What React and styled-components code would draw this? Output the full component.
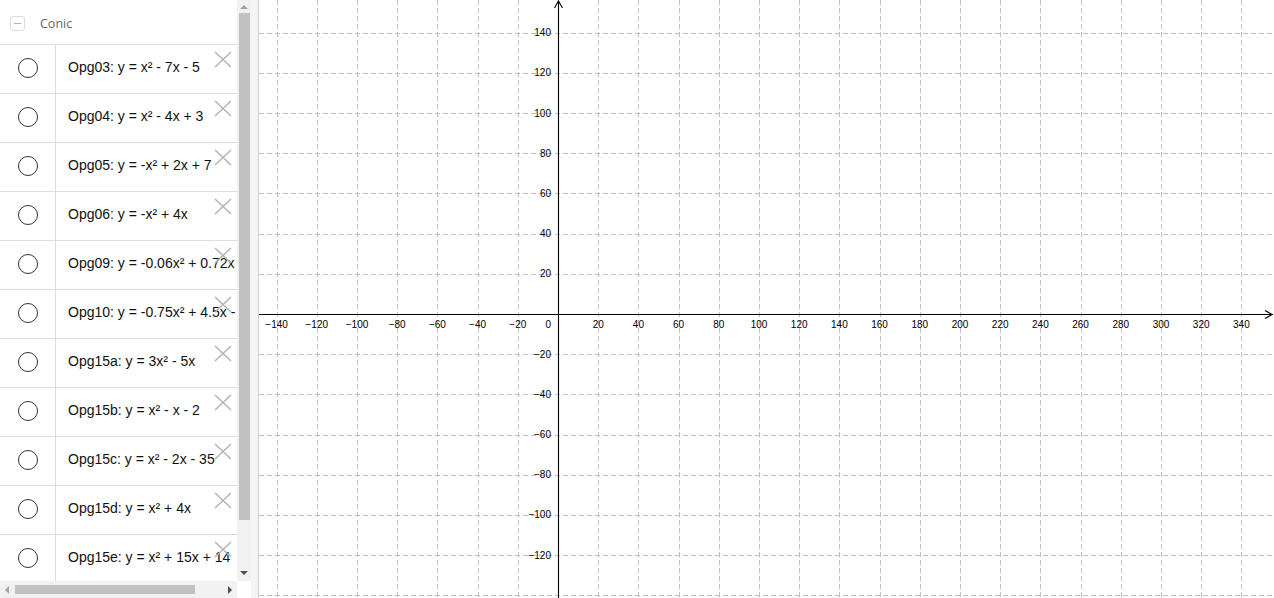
import React from "react";
import styled, { createGlobalStyle } from "styled-components";

const GlobalStyle = createGlobalStyle`
  html, body { margin: 0; padding: 0; background: #fff; }
  body { font-family: "Liberation Sans", Arial, sans-serif; }
`;

const Layout = styled.div`
  display: flex;
  width: 1274px;
  height: 598px;
  overflow: hidden;
  background: #fff;
`;

const AlgebraView = styled.div`
  width: 251px;
  flex: none;
  display: grid;
  grid-template-columns: 237px 14px;
  grid-template-rows: 581px 17px;
`;

const List = styled.div`
  overflow: hidden;
  display: flex;
  flex-direction: column;
`;

const Header = styled.div`
  height: 42px;
  flex: none;
  display: flex;
  align-items: center;
  border-bottom: 1px solid #dddddd;
  padding-left: 10px;
  padding-top: 2px;
  gap: 15px;
`;

const Collapse = styled.div`
  width: 13px;
  height: 13px;
  border: 1px solid #dcdcdc;
  border-radius: 3px;
  display: flex;
  align-items: center;
  justify-content: center;
  margin-top: 1px;
  &::after {
    content: "";
    width: 7px;
    height: 1px;
    background: #b0b0b0;
  }
`;

const GroupTitle = styled.span`
  font-family: "Open Sans", "Liberation Sans", sans-serif;
  font-size: 12.5px;
  color: #666;
`;

const Row = styled.div`
  position: relative;
  height: 48px;
  flex: none;
  display: grid;
  grid-template-columns: 56px 1fr;
  border-bottom: 1px solid #dddddd;
`;

const Marble = styled.div`
  border-right: 1px solid #dddddd;
  display: flex;
  align-items: center;
  justify-content: center;
  padding-bottom: 2px;
  &::before {
    content: "";
    width: 18px;
    height: 18px;
    border: 1.3px solid #333;
    border-radius: 50%;
    margin-left: 1px;
  }
`;

const Formula = styled.div`
  display: flex;
  align-items: center;
  padding-left: 12px;
  padding-bottom: 4px;
  white-space: nowrap;
  font-family: "Liberation Sans", Arial, sans-serif;
  font-size: 14px;
  color: #111;
  overflow: hidden;
`;

const Delete = styled.svg`
  position: absolute;
  left: 214px;
  top: 6px;
  width: 18px;
  height: 17px;
`;

const VScroll = styled.div`
  background: #f1f1f1;
  display: flex;
  flex-direction: column;
  align-items: center;
  padding: 5px 0 6px;
  gap: 4px;
`;

const HScroll = styled.div`
  background: #f1f1f1;
  display: flex;
  align-items: center;
  padding: 0 5px 0 5px;
  gap: 6px;
`;

const Corner = styled.div`
  background: #fff;
`;

const Arrow = styled.div`
  width: 0;
  height: 0;
  flex: none;
  border: 4px solid transparent;
  ${(p) => p.dir === "up" && "border-bottom-color: #a3a3a3; border-top-width: 0;"}
  ${(p) => p.dir === "down" && "border-top-color: #505050; border-bottom-width: 0;"}
  ${(p) => p.dir === "left" && "border-right-color: #a3a3a3; border-left-width: 0;"}
  ${(p) => p.dir === "right" && "border-left-color: #505050; border-right-width: 0;"}
`;

const VThumb = styled.div`
  width: 11px;
  height: 507px;
  background: #c1c1c1;
  margin-left: 1px;
`;

const VTrack = styled.div`
  flex: 1;
`;

const HThumb = styled.div`
  width: 180px;
  height: 9px;
  background: #c1c1c1;
`;

const HTrack = styled.div`
  flex: 1;
`;

const Splitter = styled.div`
  width: 7px;
  flex: none;
  background: #f5f5f5;
  border-right: 1px solid #cfcfcf;
`;

const Graphics = styled.div`
  flex: 1;
  position: relative;
  overflow: hidden;
`;

const rows = [
  "Opg03: y = x² - 7x - 5",
  "Opg04: y = x² - 4x + 3",
  "Opg05: y = -x² + 2x + 7",
  "Opg06: y = -x² + 4x",
  "Opg09: y = -0.06x² + 0.72x",
  "Opg10: y = -0.75x² + 4.5x - 6",
  "Opg15a: y = 3x² - 5x",
  "Opg15b: y = x² - x - 2",
  "Opg15c: y = x² - 2x - 35",
  "Opg15d: y = x² + 4x",
  "Opg15e: y = x² + 15x + 14",
];

const W = 1015;
const H = 598;
const OX = 299;
const OY = 314;
const SX = 40.2;
const SY = 40.17;

const label = (v) => (v < 0 ? "\u2212" + Math.abs(v) : String(v));

const Plane = () => {
  const xs = [];
  for (let k = -7; k <= 17; k++) xs.push(k);
  const ys = [];
  for (let k = -7; k <= 7; k++) ys.push(k);
  return (
    <svg width={W} height={H} style={{ display: "block" }}>
      <g stroke="#c0c0c0" strokeWidth="1" strokeDasharray="5 3">
        {xs.map((k) => {
          const x = Math.round(OX + k * SX) + 0.5;
          return <line key={"v" + k} x1={x} y1={0} x2={x} y2={H} />;
        })}
        {ys.map((k) => {
          const y = Math.round(OY - k * SY) + 0.5;
          return <line key={"h" + k} x1={0} y1={y} x2={W} y2={y} />;
        })}
      </g>
      <g stroke="#000" strokeWidth="1.1" fill="none">
        <line x1={0} y1={OY + 0.5} x2={W - 1} y2={OY + 0.5} />
        <line x1={OX + 0.5} y1={1} x2={OX + 0.5} y2={H} />
        <polyline points={`${W - 9},${OY - 3.5} ${W - 2},${OY + 0.5} ${W - 9},${OY + 4.5}`} />
        <polyline points={`${OX - 3.5},8 ${OX + 0.5},1 ${OX + 4.5},8`} />
      </g>
      <g fontFamily="'Liberation Sans', Arial, sans-serif" fontSize="10" fill="#000">
        {xs
          .filter((k) => k !== 0)
          .map((k) => (
            <text key={"lx" + k} x={OX + k * SX} y={OY + 14} textAnchor="middle">
              {label(k * 20)}
            </text>
          ))}
        {ys
          .filter((k) => k !== 0 && k > -7)
          .map((k) => (
            <text key={"ly" + k} x={OX - 7} y={OY - k * SY + 3.5} textAnchor="end">
              {label(k * 20)}
            </text>
          ))}
        <text x={OX - 7} y={OY + 14} textAnchor="end">0</text>
      </g>
    </svg>
  );
};

export default function App() {
  return (
    <>
      <GlobalStyle />
      <Layout>
        <AlgebraView>
          <List>
            <Header>
              <Collapse />
              <GroupTitle>Conic</GroupTitle>
            </Header>
            {rows.map((r) => (
              <Row key={r}>
                <Marble />
                <Formula>{r}</Formula>
                <Delete viewBox="0 0 18 17">
                  <path d="M1 1 L17 16 M17 1 L1 16" stroke="#b4b4b4" strokeWidth="1.5" fill="none" />
                </Delete>
              </Row>
            ))}
          </List>
          <VScroll>
            <Arrow dir="up" />
            <VThumb />
            <VTrack />
            <Arrow dir="down" />
          </VScroll>
          <HScroll>
            <Arrow dir="left" />
            <HThumb />
            <HTrack />
            <Arrow dir="right" />
          </HScroll>
          <Corner />
        </AlgebraView>
        <Splitter />
        <Graphics>
          <Plane />
        </Graphics>
      </Layout>
    </>
  );
}
